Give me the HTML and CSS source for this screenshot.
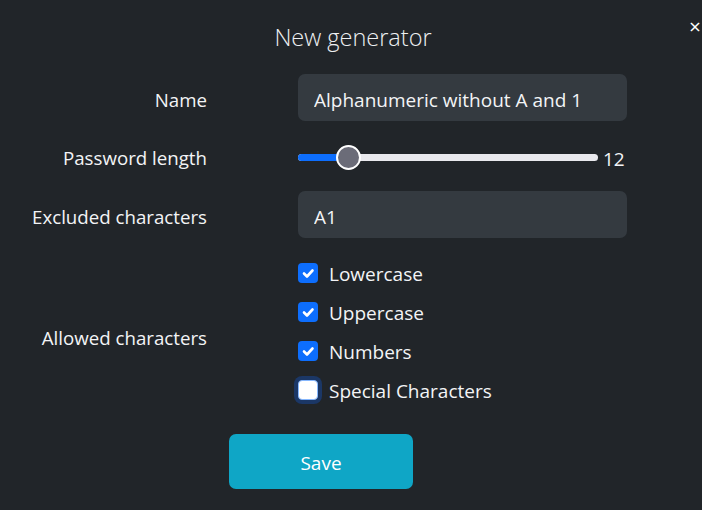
FILE: index.html
```html
<!DOCTYPE html>
<html>
<head>
<meta charset="utf-8">
<link rel="stylesheet" href="styles.css">
</head>
<body>
<div class="modal">
  <header class="head">
    <h1 class="title">New generator</h1>
    <button class="close" aria-label="Close">×</button>
  </header>
  <form class="form">
    <label class="lbl">Name</label>
    <div class="ctl"><input class="input" type="text" value="Alphanumeric without A and 1"></div>

    <label class="lbl">Password length</label>
    <div class="ctl slider-row">
      <div class="slider">
        <div class="fill" style="width:50px"></div>
        <div class="thumb" style="left:50px"></div>
      </div>
      <span class="val">12</span>
    </div>

    <label class="lbl">Excluded characters</label>
    <div class="ctl"><input class="input" type="text" value="A1"></div>

    <label class="lbl row-allowed">Allowed characters</label>
    <div class="ctl checks">
      <div class="check"><span class="box on"><svg viewBox="0 0 20 20" width="20" height="20"><path d="M6 10.5l3 3 5.5-6" fill="none" stroke="#fff" stroke-width="2.6" stroke-linecap="round" stroke-linejoin="round"/></svg></span><span class="txt">Lowercase</span></div>
      <div class="check"><span class="box on"><svg viewBox="0 0 20 20" width="20" height="20"><path d="M6 10.5l3 3 5.5-6" fill="none" stroke="#fff" stroke-width="2.6" stroke-linecap="round" stroke-linejoin="round"/></svg></span><span class="txt">Uppercase</span></div>
      <div class="check"><span class="box on"><svg viewBox="0 0 20 20" width="20" height="20"><path d="M6 10.5l3 3 5.5-6" fill="none" stroke="#fff" stroke-width="2.6" stroke-linecap="round" stroke-linejoin="round"/></svg></span><span class="txt">Numbers</span></div>
      <div class="check"><span class="box off"></span><span class="txt">Special Characters</span></div>
    </div>
  </form>
  <div class="foot">
    <button class="save" type="button">Save</button>
  </div>
</div>
</body>
</html>
```
FILE: styles.css
```css
html, body {
  margin: 0;
  padding: 0;
  background: #212529;
}
body {
  font-family: "Open Sans", "Noto Sans", sans-serif;
  color: #f3f4f6;
  width: 702px;
  height: 510px;
  overflow: hidden;
}
.modal {
  position: relative;
}
.head {
  height: 74px;
  display: flex;
  justify-content: center;
}
.title {
  margin: 20px 0 0 4px;
  font-size: 23.5px;
  font-weight: 300;
  line-height: 34px;
  color: #eef0f2;
}
.close {
  position: absolute;
  top: 16px;
  right: 0;
  width: 14px;
  height: 22px;
  padding: 0;
  border: 0;
  background: transparent;
  color: #fff;
  font-family: "DejaVu Sans", sans-serif;
  font-size: 16px;
  line-height: 22px;
  cursor: pointer;
}
.form {
  display: grid;
  grid-template-columns: 207px 329px;
  column-gap: 91px;
  align-items: center;
  row-gap: 0;
}
.lbl {
  text-align: right;
  font-size: 18.7px;
  line-height: 26px;
  padding-top: 4px;
}
.input {
  box-sizing: border-box;
  width: 329px;
  height: 47px;
  display: block;
  border: 0;
  border-radius: 7px;
  background: #343a40;
  color: #f3f4f6;
  font-family: inherit;
  font-size: 19px;
  padding: 4px 16px 0;
  outline: none;
}
.slider-row {
  display: flex;
  align-items: center;
  height: 24px;
  margin: 24px 0 22px;
}
.slider {
  position: relative;
  width: 300px;
  height: 7px;
  background: #e9e9ed;
  border-radius: 4px;
}
.fill {
  height: 7px;
  background: #0d6efd;
  border-radius: 4px 0 0 4px;
}
.thumb {
  position: absolute;
  top: 50%;
  width: 21px;
  height: 21px;
  margin: -12.5px 0 0 -12.5px;
  border: 2px solid #fff;
  border-radius: 50%;
  background: #6b6c78;
}
.val {
  margin-left: 5px;
  font-size: 19px;
  line-height: 24px;
  padding-top: 3px;
}
.checks {
  display: flex;
  flex-direction: column;
  gap: 13px;
  padding-top: 22px;
}
.row-allowed {
  padding-top: 34px;
}
.check {
  display: flex;
  align-items: center;
  gap: 11px;
  font-size: 19px;
  height: 26px;
}
.txt {
  line-height: 23px;
  padding-top: 3px;
}
.box {
  box-sizing: border-box;
  width: 20px;
  height: 20px;
  border-radius: 4px;
  flex: none;
  display: block;
}
.box svg { display: block; }
.box.on {
  background: #0d6efd;
}
.box.off {
  background: #fff;
  border: 1px solid #86b7fe;
  box-shadow: 0 0 0 4px #1b3766;
}
.foot {
  display: flex;
  padding: 31px 0 0 229px;
}
.save {
  width: 184px;
  height: 55px;
  border: 0;
  border-radius: 7px;
  background: #0fa6c6;
  color: #fff;
  font-family: inherit;
  font-size: 19px;
  padding-top: 4px;
  cursor: pointer;
}
```
